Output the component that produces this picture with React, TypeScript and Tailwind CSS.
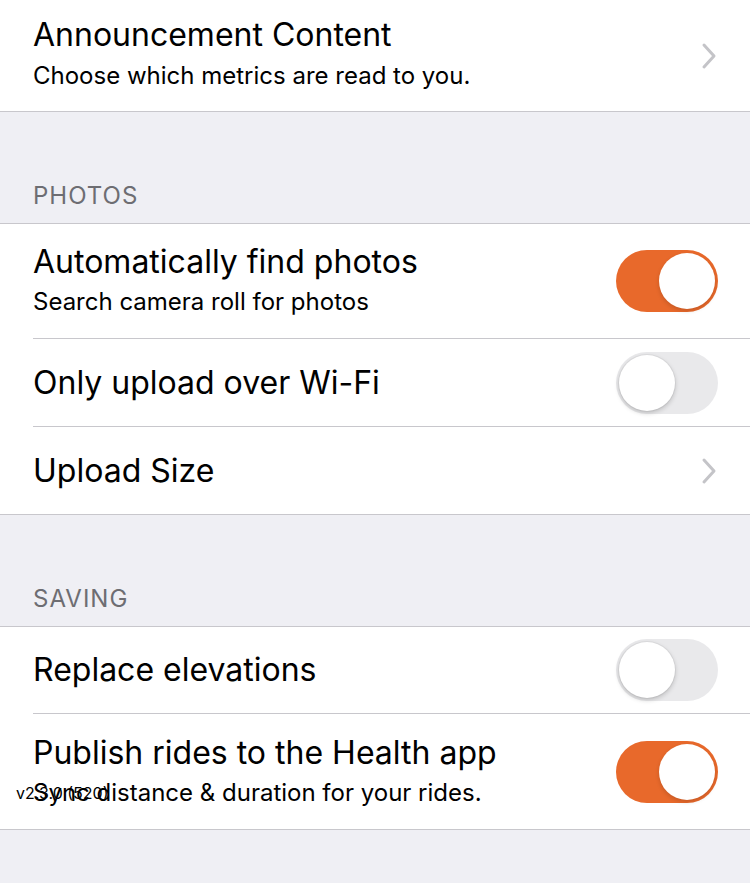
import React from 'react';

function Toggle({ on }: { on: boolean }) {
    if (on) {
        return (
            <div className="flex h-[62px] w-[102px] shrink-0 items-center justify-end rounded-full bg-[#e8692b] p-[3px]">
                <div className="h-[56px] w-[56px] rounded-full bg-white shadow-[0_2px_4px_rgba(0,0,0,0.15)]" />
            </div>
        );
    }
    return (
        <div className="flex h-[62px] w-[102px] shrink-0 items-center justify-start rounded-full bg-[#e9e9eb] p-[3px]">
            <div className="h-[56px] w-[56px] rounded-full bg-white shadow-[0_2px_5px_rgba(0,0,0,0.2),0_0_0_1px_rgba(0,0,0,0.04)]" />
        </div>
    );
}

function Chevron() {
    return (
        <svg width="18" height="28" viewBox="0 0 18 28" className="shrink-0">
            <path d="M4 3 L14 14 L4 25" fill="none" stroke="#c4c4c8" strokeWidth="3" strokeLinecap="round" strokeLinejoin="round" />
        </svg>
    );
}

function SectionHeader({ label }: { label: string }) {
    return (
        <div className="flex h-[112px] items-end border-b border-[#c8c7cc] bg-[#efeff4] px-[33px] pb-[12px]">
            <span className="text-[24px] leading-[30px] tracking-[1px] text-[#6d6d72]">{label}</span>
        </div>
    );
}

function Row({
    title,
    subtitle,
    right,
    last,
    height,
}: {
    title: string;
    subtitle?: string;
    right: React.ReactNode;
    last?: boolean;
    height: string;
}) {
    return (
        <div className="bg-white pl-[33px]">
            <div className={`flex items-center pr-[32px] ${height} ${last ? '' : 'border-b border-[#c8c7cc]'}`}>
                <div className={`flex flex-1 flex-col ${subtitle ? 'pb-[3px]' : ''}`}>
                    <span className="text-[32px] leading-[40px] text-black">{title}</span>
                    {subtitle && <span className="mt-[5px] text-[24px] leading-[30px] text-black">{subtitle}</span>}
                </div>
                {right}
            </div>
        </div>
    );
}

export default function App() {
    return (
        <div className="relative min-h-[883px] w-[750px] bg-[#efeff4] font-['Inter',sans-serif]">
            <div className="flex h-[112px] items-center border-b border-[#c8c7cc] bg-white pl-[33px] pr-[32px]">
                <div className="flex flex-1 flex-col pb-[5px]">
                    <span className="text-[32px] leading-[40px] text-black">Announcement Content</span>
                    <span className="mt-[6px] text-[24px] leading-[30px] text-black">Choose which metrics are read to you.</span>
                </div>
                <Chevron />
            </div>

            <SectionHeader label="PHOTOS" />
            <Row title="Automatically find photos" subtitle="Search camera roll for photos" right={<Toggle on />} height="h-[115px]" />
            <Row title="Only upload over Wi-Fi" right={<Toggle on={false} />} height="h-[88px]" />
            <div className="border-b border-[#c8c7cc]">
                <Row title="Upload Size" right={<Chevron />} height="h-[87px]" last />
            </div>

            <SectionHeader label="SAVING" />
            <Row title="Replace elevations" right={<Toggle on={false} />} height="h-[87px]" />
            <div className="border-b border-[#c8c7cc]">
                <Row title="Publish rides to the Health app" subtitle="Sync distance & duration for your rides." right={<Toggle on />} height="h-[115px]" last />
            </div>

            <span className="absolute left-[16px] top-[783px] text-[16px] leading-[20px] text-black">v2.3.0 (520)</span>
        </div>
    );
}
